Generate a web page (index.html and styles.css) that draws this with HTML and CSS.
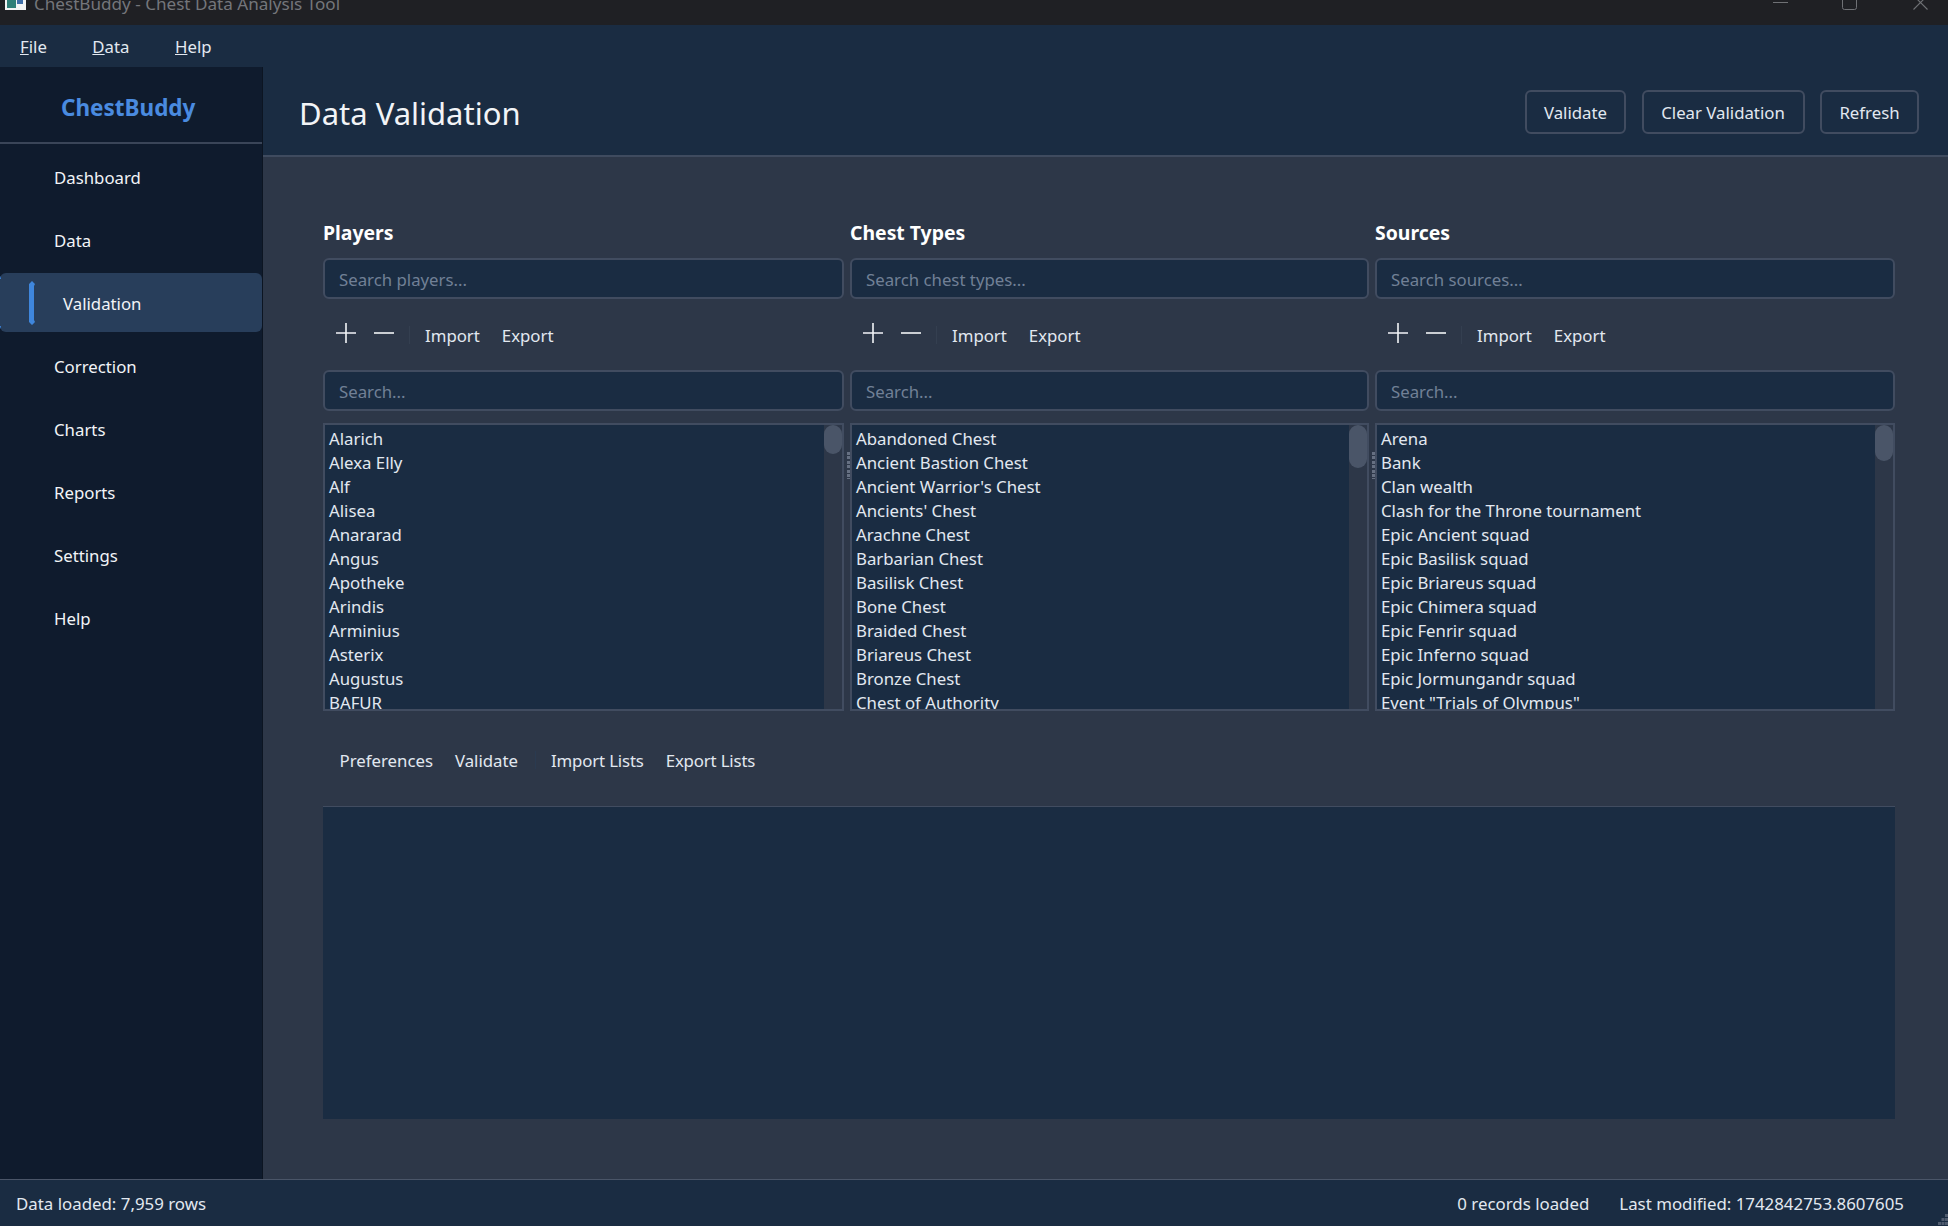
FILE: index.html
```html
<!DOCTYPE html>
<html lang="en">
<head>
    <meta charset="UTF-8">
    <meta name="viewport" content="width=device-width, initial-scale=1.0">
    <title>ChestBuddy - Chest Data Analysis Tool</title>
    <link rel="stylesheet" href="styles.css">
</head>
<body>

<div class="titlebar">
    <svg class="app-icon" width="21" height="10" viewBox="0 0 21 10">
        <rect width="21" height="10" fill="#f2f4f4"/>
        <rect x="2" y="0" width="9" height="8" fill="#2f7f78"/>
        <rect x="12" y="0" width="6" height="4" fill="#3f6fa8"/>
    </svg>
    <span class="window-title">ChestBuddy - Chest Data Analysis Tool</span>
    <div class="win-controls">
        <svg width="15" height="15" viewBox="0 0 15 15"><path d="M0 7.5H15" stroke="#6f7175"/></svg>
        <svg class="win-max" width="15" height="15" viewBox="0 0 15 15"><rect x="0.5" y="0.5" width="14" height="14" rx="2" fill="none" stroke="#6f7175"/></svg>
        <svg class="win-close" width="15" height="15" viewBox="0 0 15 15"><path d="M0.5 0.5L14.5 14.5M14.5 0.5L0.5 14.5" stroke="#6f7175" stroke-width="1.1"/></svg>
    </div>
</div>

<div class="menubar">
    <span class="menu-item"><u>F</u>ile</span>
    <span class="menu-item"><u>D</u>ata</span>
    <span class="menu-item"><u>H</u>elp</span>
</div>

<div class="main">
    <div class="sidebar">
        <div class="logo">ChestBuddy</div>
        <div class="nav">
            <div class="nav-item">Dashboard</div>
            <div class="nav-item">Data</div>
            <div class="nav-item active">
                <svg class="accent" width="6" height="44" viewBox="0 0 6 44"><path d="M3 0L6 3L5 5V39L6 41L3 44L0 41V3Z" fill="#3f86dc"/></svg>
                Validation
            </div>
            <div class="nav-item">Correction</div>
            <div class="nav-item">Charts</div>
            <div class="nav-item">Reports</div>
            <div class="nav-item">Settings</div>
            <div class="nav-item">Help</div>
        </div>
    </div>

    <div class="page">
        <div class="page-header">
            <h1>Data Validation</h1>
            <div class="header-actions">
                <button class="btn btn-validate">Validate</button>
                <button class="btn btn-clear">Clear Validation</button>
                <button class="btn btn-refresh">Refresh</button>
            </div>
        </div>

        <div class="content">
            <div class="columns">
                <div class="col">
                    <h2>Players</h2>
                    <input class="search" type="text" placeholder="Search players...">
                    <div class="toolbar">
                        <svg class="tool-icon" width="20" height="20" viewBox="0 0 20 20"><path d="M10 0V20M0 10H20" stroke="#f2f4f7" stroke-width="1.6"/></svg>
                        <svg class="tool-icon" width="20" height="20" viewBox="0 0 20 20"><path d="M0 10H20" stroke="#f2f4f7" stroke-width="1.6"/></svg>
                        <span class="tool-sep"></span>
                        <span class="tool-text">Import</span>
                        <span class="tool-text">Export</span>
                    </div>
                    <input class="search" type="text" placeholder="Search...">
                    <div class="list">
                        <div class="list-items">
                            <div>Alarich</div>
                            <div>Alexa Elly</div>
                            <div>Alf</div>
                            <div>Alisea</div>
                            <div>Anararad</div>
                            <div>Angus</div>
                            <div>Apotheke</div>
                            <div>Arindis</div>
                            <div>Arminius</div>
                            <div>Asterix</div>
                            <div>Augustus</div>
                            <div>BAFUR</div>
                        </div>
                        <div class="scrollbar"><div class="thumb thumb-players"></div></div>
                    </div>
                </div>

                <div class="col">
                    <h2>Chest Types</h2>
                    <input class="search" type="text" placeholder="Search chest types...">
                    <div class="toolbar">
                        <svg class="tool-icon" width="20" height="20" viewBox="0 0 20 20"><path d="M10 0V20M0 10H20" stroke="#f2f4f7" stroke-width="1.6"/></svg>
                        <svg class="tool-icon" width="20" height="20" viewBox="0 0 20 20"><path d="M0 10H20" stroke="#f2f4f7" stroke-width="1.6"/></svg>
                        <span class="tool-sep"></span>
                        <span class="tool-text">Import</span>
                        <span class="tool-text">Export</span>
                    </div>
                    <input class="search" type="text" placeholder="Search...">
                    <div class="list has-handle">
                        <div class="list-items">
                            <div>Abandoned Chest</div>
                            <div>Ancient Bastion Chest</div>
                            <div>Ancient Warrior's Chest</div>
                            <div>Ancients' Chest</div>
                            <div>Arachne Chest</div>
                            <div>Barbarian Chest</div>
                            <div>Basilisk Chest</div>
                            <div>Bone Chest</div>
                            <div>Braided Chest</div>
                            <div>Briareus Chest</div>
                            <div>Bronze Chest</div>
                            <div>Chest of Authority</div>
                        </div>
                        <div class="scrollbar"><div class="thumb thumb-chests"></div></div>
                    </div>
                </div>

                <div class="col">
                    <h2>Sources</h2>
                    <input class="search" type="text" placeholder="Search sources...">
                    <div class="toolbar">
                        <svg class="tool-icon" width="20" height="20" viewBox="0 0 20 20"><path d="M10 0V20M0 10H20" stroke="#f2f4f7" stroke-width="1.6"/></svg>
                        <svg class="tool-icon" width="20" height="20" viewBox="0 0 20 20"><path d="M0 10H20" stroke="#f2f4f7" stroke-width="1.6"/></svg>
                        <span class="tool-sep"></span>
                        <span class="tool-text">Import</span>
                        <span class="tool-text">Export</span>
                    </div>
                    <input class="search" type="text" placeholder="Search...">
                    <div class="list has-handle">
                        <div class="list-items">
                            <div>Arena</div>
                            <div>Bank</div>
                            <div>Clan wealth</div>
                            <div>Clash for the Throne tournament</div>
                            <div>Epic Ancient squad</div>
                            <div>Epic Basilisk squad</div>
                            <div>Epic Briareus squad</div>
                            <div>Epic Chimera squad</div>
                            <div>Epic Fenrir squad</div>
                            <div>Epic Inferno squad</div>
                            <div>Epic Jormungandr squad</div>
                            <div>Event "Trials of Olympus"</div>
                        </div>
                        <div class="scrollbar"><div class="thumb thumb-sources"></div></div>
                    </div>
                </div>
            </div>

            <div class="bottom-toolbar">
                <span class="bottom-text">Preferences</span>
                <span class="bottom-text">Validate</span>
                <span class="bottom-sep"></span>
                <span class="bottom-text lists">Import Lists</span>
                <span class="bottom-text lists">Export Lists</span>
            </div>

            <div class="results"></div>
        </div>
    </div>
</div>

<div class="statusbar">
    <span>Data loaded: 7,959 rows</span>
    <div class="status-right">
        <span>0 records loaded</span>
        <span>Last modified: 1742842753.8607605</span>
    </div>
    <svg class="grip" width="10" height="13" viewBox="0 0 10 13">
        <path d="M7 1h3v3H7zM3.5 5h3v3h-3zM7 5h3v3H7zM0 9h3v3H0zM3.5 9h3v3h-3zM7 9h3v3H7z" fill="#4f5b6e"/>
    </svg>
</div>

</body>
</html>
```
FILE: styles.css
```css
* {
    box-sizing: border-box;
}
html, body {
    height: 100%;
}
body {
    margin: 0;
    display: flex;
    flex-direction: column;
    overflow: hidden;
    font-family: "Noto Sans", sans-serif;
    font-size: 16.8px;
    color: #f2f4f7;
    background-color: #2d3748;
}

/* window chrome, cut off at the top of the capture */
.titlebar {
    display: flex;
    align-items: flex-start;
    height: 25px;
    overflow: hidden;
    flex-shrink: 0;
    background-color: #1f2024;
}
.app-icon {
    margin: 0 8px 0 5px;
}
.window-title {
    margin-top: -8px;
    font-size: 17.1px;
    line-height: 24px;
    color: #74767b;
}
.win-controls {
    display: flex;
    margin-left: auto;
    margin-top: -5px;
    padding-right: 20px;
}
.win-max {
    margin-left: 54px;
}
.win-close {
    margin-left: 56px;
}

.menubar {
    display: flex;
    align-items: center;
    gap: 45.5px;
    height: 42px;
    padding-left: 20px;
    flex-shrink: 0;
    background-color: #1a2c42;
    color: #e2e8f0;
}

.main {
    display: flex;
    flex: 1;
    min-height: 0;
}

.sidebar {
    width: 263px;
    flex-shrink: 0;
    background-color: #0f1b2d;
    border-right: 1px solid #0c1522;
}
.logo {
    height: 77px;
    padding-top: 22px;
    padding-left: 61px;
    font-size: 22.5px;
    line-height: 38px;
    font-weight: 700;
    color: #4a8be0;
    border-bottom: 2px solid #3a4558;
}
.nav {
    padding-top: 3px;
}
.nav-item {
    display: flex;
    align-items: center;
    height: 59px;
    margin-bottom: 4px;
    padding-left: 54px;
    padding-top: 1px;
}
.nav-item.active {
    padding-left: 29px;
    background: linear-gradient(#3f86dc, #3f86dc) 0 2px / 1px 4px no-repeat,
                linear-gradient(#3f86dc, #3f86dc) 0 calc(100% - 2px) / 1px 4px no-repeat,
                #283e5b;
    border-radius: 6px;
}
.accent {
    margin-right: 28px;
}

.page {
    flex: 1;
    min-width: 0;
    display: flex;
    flex-direction: column;
}
.page-header {
    display: flex;
    align-items: center;
    justify-content: space-between;
    height: 90px;
    padding: 2px 29px 0 36px;
    background-color: #1a2c42;
    border-bottom: 2px solid #3f4b5f;
}
.page-header h1 {
    margin: 2px 0 0;
    font-size: 31px;
    font-weight: 400;
}
.header-actions {
    display: flex;
    gap: 15.5px;
}
.btn {
    height: 44px;
    padding: 0;
    font-family: inherit;
    font-size: 16.8px;
    color: #e2e8f0;
    background-color: transparent;
    border: 2px solid #414c60;
    border-radius: 6px;
}
.btn-validate {
    width: 101px;
}
.btn-clear {
    width: 163px;
}
.btn-refresh {
    width: 99px;
}

.content {
    flex: 1;
    padding: 63px 53px 60px 60px;
    display: flex;
    flex-direction: column;
}
.columns {
    display: grid;
    grid-template-columns: 521px 519px 1fr;
    gap: 6px;
}
.col h2 {
    margin: 0 0 12px;
    font-size: 19.4px;
    line-height: 26px;
    font-weight: 700;
    color: #fff;
}
.search {
    display: block;
    width: 100%;
    height: 41px;
    padding: 2px 14px 0;
    font-family: inherit;
    font-size: 16.8px;
    color: #e2e8f0;
    background-color: #1a2c42;
    border: 2px solid #414c60;
    border-radius: 6px;
}
.search::placeholder {
    color: #718096;
    opacity: 1;
}
.toolbar {
    display: flex;
    align-items: center;
    height: 71px;
    padding-left: 13px;
}
.tool-icon {
    margin-right: 18px;
    margin-top: -3px;
}
.tool-sep {
    width: 1px;
    height: 18px;
    margin-left: -3px;
    margin-right: 15px;
    background-color: #343f50;
}
.tool-text {
    margin-right: 22px;
    margin-top: 1px;
    color: #e2e8f0;
}
.list {
    position: relative;
    display: flex;
    height: 288px;
    margin-top: 12px;
    background-color: #1a2c42;
    border: 2px solid #414c60;
}
.list-items {
    flex: 1;
    min-width: 0;
    padding: 1.5px 0 0 4px;
    line-height: 24px;
    overflow: hidden;
    color: #e2e8f0;
}
.has-handle::before {
    content: "";
    position: absolute;
    left: -5px;
    top: 27px;
    width: 3px;
    height: 27px;
    background: repeating-linear-gradient(to bottom, #667082 0 3px, transparent 3px 4.4px);
}
.scrollbar {
    width: 18px;
    flex-shrink: 0;
    background-color: #2d3748;
}
.thumb {
    height: 29px;
    border-radius: 9px;
    background-color: #4a5568;
}
.thumb-chests {
    height: 43px;
}
.thumb-sources {
    height: 36px;
}

.bottom-toolbar {
    display: flex;
    align-items: center;
    height: 95px;
    padding-left: 16.5px;
    padding-top: 3px;
    color: #e2e8f0;
}
.bottom-text {
    margin-right: 22px;
}
.bottom-text.lists {
    letter-spacing: -0.15px;
}
.bottom-sep {
    width: 1px;
    height: 18px;
    margin-left: -5px;
    margin-right: 15px;
    background-color: #2a3a50;
}
.results {
    flex: 1;
    background-color: #1a2c42;
    border-top: 1px solid #414c60;
}

.statusbar {
    position: relative;
    display: flex;
    align-items: center;
    justify-content: space-between;
    height: 47px;
    padding: 0 44px 0 16px;
    flex-shrink: 0;
    font-size: 16.85px;
    background-color: #1a2c42;
    border-top: 1px solid #4a5568;
    color: #e2e8f0;
}
.status-right {
    display: flex;
    gap: 30px;
}
.grip {
    position: absolute;
    right: 0;
    bottom: 0;
}
```
